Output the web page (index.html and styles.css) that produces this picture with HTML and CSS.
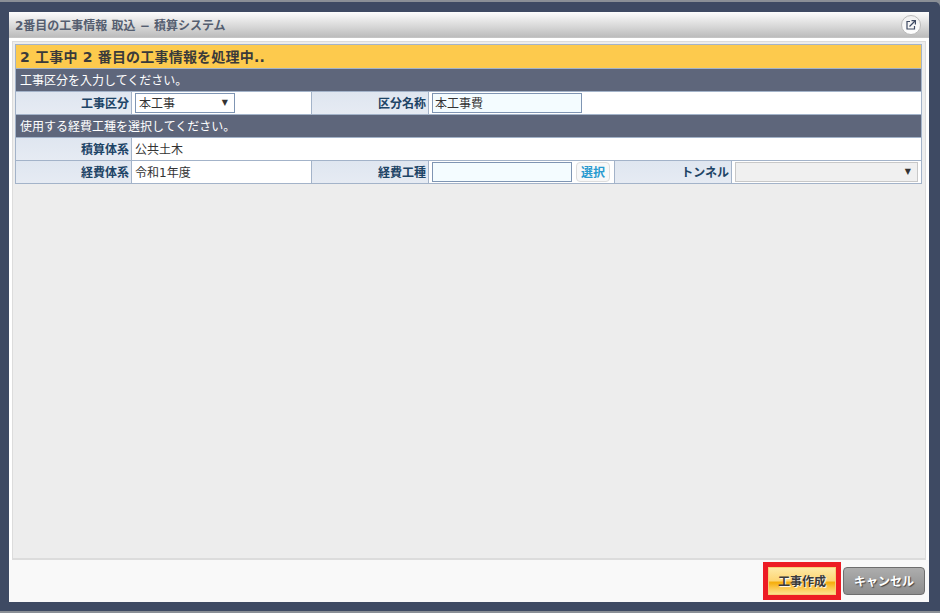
FILE: index.html
```html
<!DOCTYPE html>
<html lang="ja">
<head>
<meta charset="utf-8">
<title>2番目の工事情報 取込 − 積算システム</title>
<link rel="stylesheet" href="styles.css">
</head>
<body>
<div class="frame">
  <div class="window">
    <header class="titlebar">
      <span class="title">2番目の工事情報 取込 − 積算システム</span>
      <span class="popout">
        <svg width="10" height="10" viewBox="0 0 10 10" fill="none" stroke="#3e4a63" stroke-width="1.2">
          <path d="M4 1.5H1V9H8.5V6"/>
          <path d="M3.5 6.5L9 1"/>
          <path d="M5.5 .6H9.4V4.5"/>
        </svg>
      </span>
    </header>
    <main class="panel">
      <div class="grid">
        <div class="heading full">2 工事中 2 番目の工事情報を処理中..</div>
        <div class="section full">工事区分を入力してください。</div>
        <div class="label">工事区分</div>
        <div class="value"><div class="select short"><span>本工事</span><span class="arrow">▼</span></div></div>
        <div class="label">区分名称</div>
        <div class="value span3"><input class="field name" type="text" value="本工事費"></div>
        <div class="section full">使用する経費工種を選択してください。</div>
        <div class="label">積算体系</div>
        <div class="value text span5">公共土木</div>
        <div class="label">経費体系</div>
        <div class="value text">令和1年度</div>
        <div class="label">経費工種</div>
        <div class="value"><input class="field kind" type="text"><button class="pick" type="button">選択</button></div>
        <div class="label">トンネル</div>
        <div class="value"><div class="select wide"><span></span><span class="arrow">▼</span></div></div>
      </div>
    </main>
    <footer class="footer">
      <div class="highlight"><button class="btn primary" type="button">工事作成</button></div>
      <button class="btn cancel" type="button">キャンセル</button>
    </footer>
  </div>
</div>
</body>
</html>
```

FILE: styles.css
```css
* { box-sizing: border-box; }
html, body { margin: 0; height: 100%; overflow: hidden; }
body {
  background: #8a8f96;
  padding-top: 2px;
  font-family: "DejaVu Sans", "Noto Sans CJK JP", sans-serif;
  font-size: 12px;
  color: #333;
}
.frame {
  width: 940px;
  height: 609px;
  background: #3e4a63;
  border-radius: 0 5px 0 0;
  padding: 10px 11px 9px 9px;
}
.window {
  width: 920px;
  height: 590px;
  background: #fff;
  display: flex;
  flex-direction: column;
}
.titlebar {
  height: 26px;
  flex: none;
  display: flex;
  align-items: center;
  justify-content: space-between;
  padding: 0 8px 0 6px;
  background: linear-gradient(#fdfdfd, #bcbcbc);
  border-bottom: 1px solid #c4c4c4;
}
.title { font-weight: bold; color: #555e70; font-size: 12px; }
.popout {
  width: 20px;
  height: 20px;
  border-radius: 50%;
  border: 1px solid #bbb;
  background: linear-gradient(#f0f0f0, #fff);
  display: flex;
  align-items: center;
  justify-content: center;
}
.panel {
  flex: 1;
  min-height: 0;
  margin: 3px 3px 0 3px;
  background: #ededed;
  border: 1px solid #dcdcdc;
  border-bottom-width: 2px;
  padding: 2px;
}
.grid {
  display: grid;
  grid-template-columns: 115px 179px 116px 185px 116px 189px;
  grid-template-rows: 23px repeat(5, 22px);
  gap: 1px;
  background: #a3b3c9;
  border: 1px solid #a3b3c9;
  width: 907px;
}
.full { grid-column: 1 / -1; display: flex; align-items: center; }
.heading { background: #fdca4d; font-size: 14px; font-weight: bold; color: #3a3a3a; padding: 0 0 2px 4px; letter-spacing: 0.2px; }
.section { background: #5e667b; color: #fff; padding: 0 0 2px 4px; }
.label {
  background: linear-gradient(#dfe6f0, #e6ebf3);
  color: #1d4466;
  font-weight: bold;
  padding: 0 2px 2px 0;
  display: flex;
  align-items: center;
  justify-content: flex-end;
}
.value { background: #fff; display: flex; align-items: center; padding-left: 3px; color: #333; }
.value.text { padding-bottom: 2px; }
.value.span3 { grid-column: span 3; }
.value.span5 { grid-column: span 5; }
.select {
  height: 20px;
  display: flex;
  align-items: center;
  justify-content: space-between;
  padding: 0 6px 2px 3px;
}
.select.short { width: 100px; border: 1px solid #7f95b3; background: #fff; }
.select.wide { width: 183px; border: 1px solid #c8c8c8; background: #f0f0f0; }
.arrow { font-size: 8px; color: #333; }
.field {
  height: 20px;
  border: 1px solid #7f95b3;
  background: #f4fcff;
  padding: 0 2px 2px;
  font: 12px "DejaVu Sans", "Noto Sans CJK JP", sans-serif;
  color: #333;
  outline: none;
}
.field.name { width: 150px; }
.field.kind { width: 140px; }
.pick {
  margin-left: 4px;
  width: 34px;
  height: 20px;
  padding: 0 0 2px;
  border: 1px solid #ddd;
  border-radius: 4px;
  background: #f8f8f8;
  color: #2a9bd0;
  font: bold 12px "DejaVu Sans", "Noto Sans CJK JP", sans-serif;
}
.footer {
  flex: none;
  height: 42px;
  background: #f9f9f9;
  display: flex;
  align-items: center;
  justify-content: flex-end;
  padding: 0 4px 0 0;
  gap: 2px;
}
.highlight {
  border: 5px solid #ed1c24;
  background: #f9f9f9;
  width: 78px;
  height: 38px;
  display: flex;
}
.btn {
  height: 28px;
  padding: 0 0 2px;
  font: bold 12px "DejaVu Sans", "Noto Sans CJK JP", sans-serif;
}
.primary {
  width: 100%;
  height: 100%;
  border: 1px solid #f8cf78;
  color: #3a3a3a;
  background: linear-gradient(#fee9a6, #fdd675 48%, #f5ae0c 56%, #fbc648 75%, #fde08e);
  text-shadow: 1px 1px 1px #fff;
}
.cancel {
  width: 82px;
  border: 1px solid #6e6e6e;
  border-radius: 4px;
  color: #fff;
  background: linear-gradient(#adadad, #8d8d8d);
  text-shadow: 1px 1px 1px #444;
}
```
